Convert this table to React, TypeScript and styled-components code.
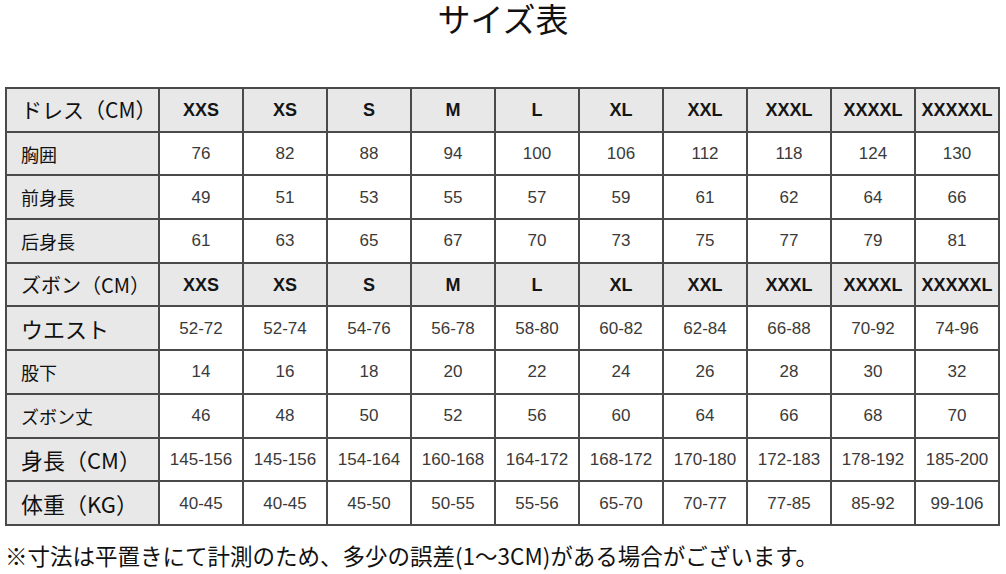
import styled, { createGlobalStyle } from "styled-components";

const GlobalStyle = createGlobalStyle`
  html, body {
    margin: 0;
    padding: 0;
    background: #fff;
  }
  body {
    font-family: "Noto Sans CJK JP", "Noto Sans", sans-serif;
    color: #111;
  }
`;

const Page = styled.div`
  width: 1006px;
  height: 574px;
  display: flex;
  flex-direction: column;
`;

const Title = styled.div`
  flex: 0 0 87px;
  text-align: center;
  font-family: "Noto Sans CJK JP", sans-serif;
  font-weight: 400;
  font-size: 33px;
  line-height: 37px;
  color: #111;
`;

const Table = styled.table`
  flex: 0 0 auto;
  margin-left: 5px;
  width: 995px;
  border-collapse: collapse;
  table-layout: fixed;
  border: 2px solid #4a4a4a;
`;

const Row = styled.tr<{ $head?: boolean }>`
  height: 43.7px;
  background: ${(p) => (p.$head ? "#e8e8e8" : "#fff")};
`;

const Label = styled.th<{ $size: number }>`
  box-sizing: border-box;
  width: 153px;
  padding: 0 0 0 14px;
  text-align: left;
  font-family: "Noto Sans CJK JP", sans-serif;
  font-weight: 400;
  font-size: ${(p) => p.$size}px;
  line-height: 1;
  color: #111;
  background: #e8e8e8;
  border: 2px solid #4a4a4a;
  white-space: nowrap;
`;

const Cell = styled.td<{ $bold?: boolean }>`
  padding: 0;
  text-align: center;
  font-family: "Liberation Sans", Arial, sans-serif;
  font-size: ${(p) => (p.$bold ? "18px" : "17px")};
  font-weight: ${(p) => (p.$bold ? 700 : 400)};
  line-height: 1;
  color: ${(p) => (p.$bold ? "#151515" : "#3a3a3a")};
  border: 2px solid #4a4a4a;
  white-space: nowrap;
`;

const Note = styled.p`
  flex: 0 0 auto;
  margin: 0;
  padding: 14px 0 0 5px;
  font-family: "Noto Sans CJK JP", sans-serif;
  font-size: 22.5px;
  line-height: 30px;
  color: #111;
  white-space: nowrap;
`;

const sizes = ["XXS", "XS", "S", "M", "L", "XL", "XXL", "XXXL", "XXXXL", "XXXXXL"];

type RowData = { label: string; size: number; values: string[]; head?: boolean };

const rows: RowData[] = [
  { label: "ドレス（CM）", size: 21, values: sizes, head: true },
  { label: "胸囲", size: 18, values: ["76", "82", "88", "94", "100", "106", "112", "118", "124", "130"] },
  { label: "前身長", size: 18, values: ["49", "51", "53", "55", "57", "59", "61", "62", "64", "66"] },
  { label: "后身長", size: 18, values: ["61", "63", "65", "67", "70", "73", "75", "77", "79", "81"] },
  { label: "ズボン（CM）", size: 20, values: sizes, head: true },
  { label: "ウエスト", size: 22, values: ["52-72", "52-74", "54-76", "56-78", "58-80", "60-82", "62-84", "66-88", "70-92", "74-96"] },
  { label: "股下", size: 18, values: ["14", "16", "18", "20", "22", "24", "26", "28", "30", "32"] },
  { label: "ズボン丈", size: 18, values: ["46", "48", "50", "52", "56", "60", "64", "66", "68", "70"] },
  { label: "身長（CM）", size: 22, values: ["145-156", "145-156", "154-164", "160-168", "164-172", "168-172", "170-180", "172-183", "178-192", "185-200"] },
  { label: "体重（KG）", size: 22, values: ["40-45", "40-45", "45-50", "50-55", "55-56", "65-70", "70-77", "77-85", "85-92", "99-106"] },
];

export default function App() {
  return (
    <Page>
      <GlobalStyle />
      <Title>サイズ表</Title>
      <Table>
        <tbody>
          {rows.map((r) => (
            <Row key={r.label} $head={r.head}>
              <Label $size={r.size}>{r.label}</Label>
              {r.values.map((v, i) => (
                <Cell key={i} $bold={r.head}>
                  {v}
                </Cell>
              ))}
            </Row>
          ))}
        </tbody>
      </Table>
      <Note>※寸法は平置きにて計測のため、多少の誤差(1～3CM)がある場合がございます。</Note>
    </Page>
  );
}
